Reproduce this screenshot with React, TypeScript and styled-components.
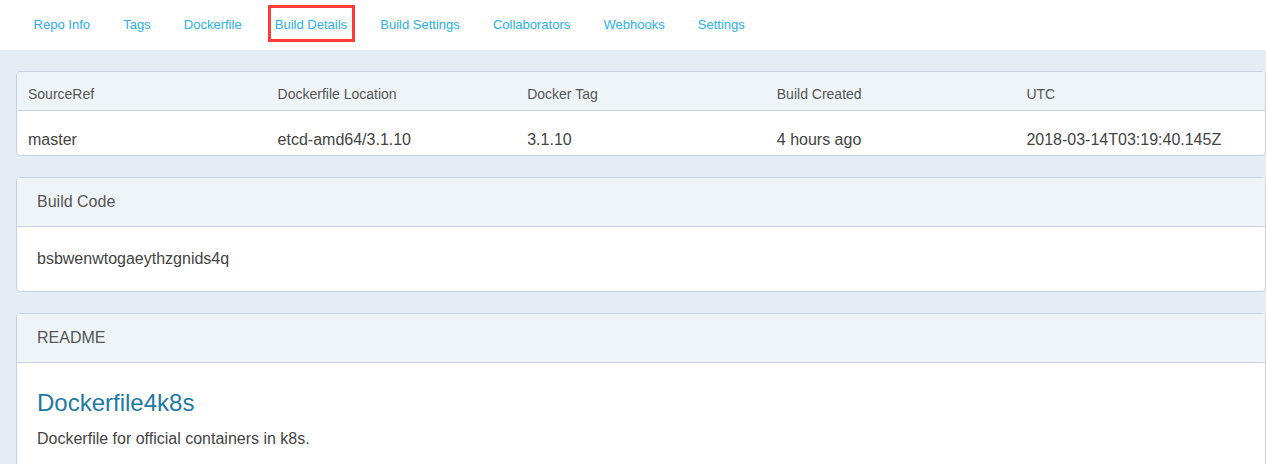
import styled, { createGlobalStyle } from "styled-components";

const GlobalStyle = createGlobalStyle`
  html, body {
    margin: 0;
    padding: 0;
    background: #e6ecf4;
    font-family: "Liberation Sans", Arial, sans-serif;
    color: #444;
  }
`;

const tabs = [
  "Repo Info",
  "Tags",
  "Dockerfile",
  "Build Details",
  "Build Settings",
  "Collaborators",
  "Webhooks",
  "Settings",
];

const columns = [
  { head: "SourceRef", value: "master" },
  { head: "Dockerfile Location", value: "etcd-amd64/3.1.10" },
  { head: "Docker Tag", value: "3.1.10" },
  { head: "Build Created", value: "4 hours ago" },
  { head: "UTC", value: "2018-03-14T03:19:40.145Z" },
];

const App = () => {
  return (
    <>
      <GlobalStyle />
      <NavBar>
        {tabs.map((t) => (
          <Tab key={t} $active={t === "Build Details"}>
            {t}
          </Tab>
        ))}
      </NavBar>
      <Content>
        <Panel>
          <Table>
            <thead>
              <tr>
                {columns.map((c) => (
                  <Th key={c.head}>{c.head}</Th>
                ))}
              </tr>
            </thead>
            <tbody>
              <tr>
                {columns.map((c) => (
                  <Td key={c.head}>{c.value}</Td>
                ))}
              </tr>
            </tbody>
          </Table>
        </Panel>

        <Panel>
          <PanelHeading>Build Code</PanelHeading>
          <PanelBody>bsbwenwtogaeythzgnids4q</PanelBody>
        </Panel>

        <Panel>
          <PanelHeading>README</PanelHeading>
          <Readme>
            <h1>Dockerfile4k8s</h1>
            <p>Dockerfile for official containers in k8s.</p>
          </Readme>
        </Panel>
      </Content>
    </>
  );
};

const NavBar = styled.nav`
  display: flex;
  align-items: center;
  height: 50px;
  padding-left: 17px;
  background: #fff;
`;

const Tab = styled.a<{ $active?: boolean }>`
  position: relative;
  padding: 0 16.6px;
  font-size: 13px;
  line-height: 16px;
  color: #2bb0ec;
  cursor: pointer;

  ${(p) =>
    p.$active &&
    `
    &::after {
      content: "";
      position: absolute;
      left: 10px;
      right: 9px;
      top: -12px;
      bottom: -9px;
      border: 3px solid #fb3a3a;
    }
  `}
`;

const Content = styled.main`
  display: flex;
  flex-direction: column;
  gap: 21px;
  padding: 21px 0 0 16px;
`;

const Panel = styled.section`
  background: #fff;
  border: 1px solid #c8d2de;
  border-radius: 4px;
  overflow: hidden;
`;

const Table = styled.table`
  width: 100%;
  border-collapse: collapse;
  table-layout: fixed;
`;

const Th = styled.th`
  padding: 14px 11px 7px;
  line-height: 17px;
  text-align: left;
  font-weight: normal;
  font-size: 14px;
  color: #555;
  background: #eff4f9;
  border-bottom: 1px solid #c8d2de;
`;

const Td = styled.td`
  padding: 19px 11px 6px;
  line-height: 19px;
  font-size: 16px;
  color: #444;
`;

const PanelHeading = styled.div`
  height: 48px;
  display: flex;
  align-items: center;
  padding: 0 20px;
  font-size: 16px;
  color: #555;
  background: #eff4f9;
  border-bottom: 1px solid #c8d2de;
`;

const PanelBody = styled.div`
  height: 64px;
  display: flex;
  align-items: center;
  padding: 0 20px;
  font-size: 16px;
  color: #444;
`;

const Readme = styled.div`
  padding: 26px 20px 20px;

  h1 {
    margin: 0 0 13px;
    font-size: 24px;
    font-weight: normal;
    color: #1e7aa2;
  }

  p {
    margin: 0;
    font-size: 16px;
    color: #444;
  }
`;

export default App;
